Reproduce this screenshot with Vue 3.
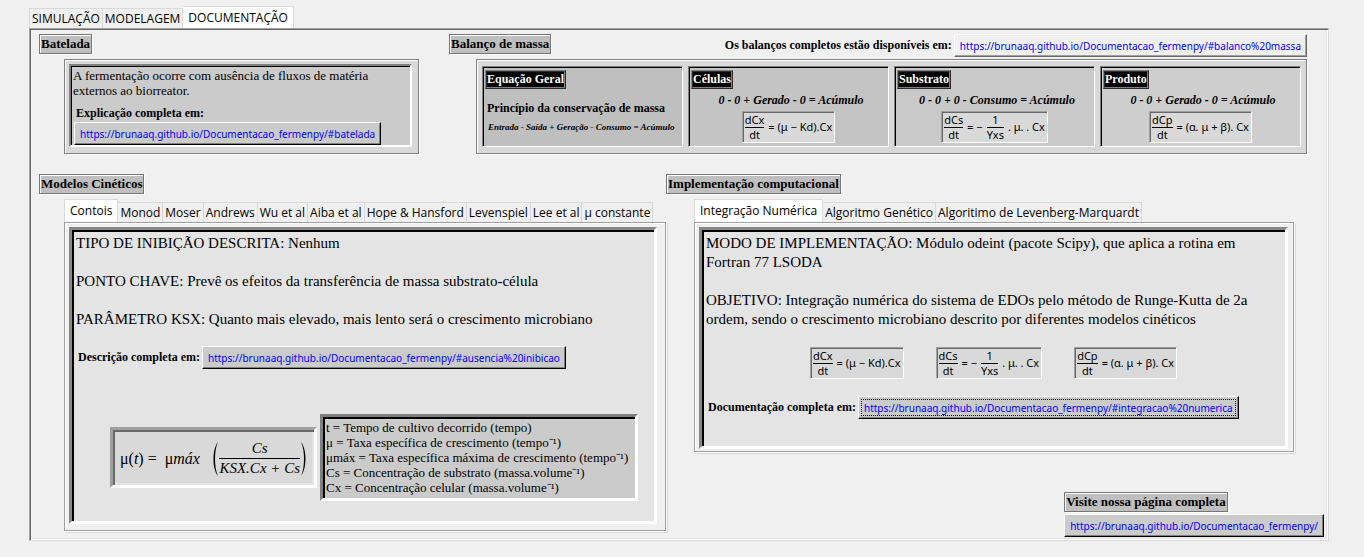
<script setup>
import { ref } from 'vue'

const base = 'https://brunaaq.github.io/Documentacao_fermenpy/'

const mainTabs = ['SIMULAÇÃO', 'MODELAGEM', 'DOCUMENTAÇÃO']
const modelTabs = ['Contois', 'Monod', 'Moser', 'Andrews', 'Wu et al', 'Aiba et al', 'Hope & Hansford', 'Levenspiel', 'Lee et al', 'μ constante']
const methodTabs = ['Integração Numérica', 'Algoritmo Genético', 'Algoritimo de Levenberg-Marquardt']

const mainTab = ref(2)
const modelTab = ref(0)
const methodTab = ref(0)

const equations = {
  cells: [{ n: 'dCx', d: 'dt' }, '= (μ − Kd).Cx'],
  substrate: [{ n: 'dCs', d: 'dt' }, '= −', { n: '1', d: 'Yxs' }, '. μ. . Cx'],
  product: [{ n: 'dCp', d: 'dt' }, '= (α. μ + β). Cx'],
}

const balances = [
  { title: 'Células', tone: 'tone-2', text: '0 - 0 + Gerado - 0 = Acúmulo', eq: equations.cells },
  { title: 'Substrato', tone: 'tone-3', text: '0 - 0 + 0 - Consumo = Acúmulo', eq: equations.substrate },
  { title: 'Produto', tone: 'tone-4', text: '0 - 0 + Gerado - 0 = Acúmulo', eq: equations.product },
]

const legend = [
  't = Tempo de cultivo decorrido (tempo)',
  'μ = Taxa específica de crescimento (tempo⁻¹)',
  'μmáx = Taxa específica máxima de crescimento (tempo⁻¹)',
  'Cs = Concentração de substrato (massa.volume⁻¹)',
  'Cx = Concentração celular (massa.volume⁻¹)',
]
</script>

<template>
  <main class="window">
    <div class="tabs main-tabs" role="tablist">
      <button v-for="(t, i) in mainTabs" :key="t" type="button" role="tab" class="tab" :class="{ active: i === mainTab }" :aria-selected="i === mainTab" @click="mainTab = i">{{ t }}</button>
    </div>

    <div class="page">
      <div class="row top-row">
        <section>
          <h2 class="title">Batelada</h2>
          <div class="frame batch">
            <div class="sunken note">
              <p>A fermentação ocorre com ausência de fluxos de matéria<br>externos ao biorreator.</p>
              <p class="caption">Explicação completa em:</p>
              <button type="button" class="link">{{ base }}#batelada</button>
            </div>
          </div>
        </section>

        <section>
          <div class="head">
            <h2 class="title">Balanço de massa</h2>
            <div class="head-link">
              <span class="caption">Os balanços completos estão disponíveis em:</span>
              <button type="button" class="link pale">{{ base }}#balanco%20massa</button>
            </div>
          </div>
          <div class="frame balance">
            <div class="cell tone-1">
              <h3 class="tag">Equação Geral</h3>
              <p class="caption principle">Princípio da conservação de massa</p>
              <p class="general">Entrada - Saída + Geração - Consumo = Acúmulo</p>
            </div>
            <div v-for="b in balances" :key="b.title" class="cell" :class="b.tone">
              <h3 class="tag">{{ b.title }}</h3>
              <p class="terms">{{ b.text }}</p>
              <div class="eq">
                <template v-for="(part, k) in b.eq" :key="k">
                  <span v-if="part.n" class="frac"><span>{{ part.n }}</span><span>{{ part.d }}</span></span>
                  <span v-else>{{ part }}</span>
                </template>
              </div>
            </div>
          </div>
        </section>
      </div>

      <div class="row bottom-row">
        <section>
          <h2 class="title">Modelos Cinéticos</h2>
          <div class="notebook">
            <div class="tabs" role="tablist">
              <button v-for="(t, i) in modelTabs" :key="t" type="button" role="tab" class="tab" :class="{ active: i === modelTab }" :aria-selected="i === modelTab" @click="modelTab = i">{{ t }}</button>
            </div>
            <div class="pane">
              <div class="deep model">
                <p class="body">TIPO DE INIBIÇÃO DESCRITA: Nenhum<br><br>PONTO CHAVE: Prevê os efeitos da transferência de massa substrato-célula<br><br>PARÂMETRO KSX: Quanto mais elevado, mais lento será o crescimento microbiano</p>
                <div class="link-row">
                  <span class="caption">Descrição completa em:</span>
                  <button type="button" class="link">{{ base }}#ausencia%20inibicao</button>
                </div>
                <div class="formula-row">
                  <div class="formula">
                    <span>μ(<i>t</i>) =&nbsp; μ<i>máx</i></span>
                    <div class="group">
                      <svg class="paren" viewBox="0 0 8 36" aria-hidden="true"><path d="M7 1C1 8 1 28 7 35C3 27 3 9 7 1Z" /></svg>
                      <span class="frac"><i>Cs</i><i>KSX.Cx + Cs</i></span>
                      <svg class="paren" viewBox="0 0 8 36" aria-hidden="true"><path d="M1 1C7 8 7 28 1 35C5 27 5 9 1 1Z" /></svg>
                    </div>
                  </div>
                  <ul class="legend">
                    <li v-for="l in legend" :key="l">{{ l }}</li>
                  </ul>
                </div>
              </div>
            </div>
          </div>
        </section>

        <section class="methods">
          <h2 class="title">Implementação computacional</h2>
          <div class="notebook">
            <div class="tabs" role="tablist">
              <button v-for="(t, i) in methodTabs" :key="t" type="button" role="tab" class="tab" :class="{ active: i === methodTab }" :aria-selected="i === methodTab" @click="methodTab = i">{{ t }}</button>
            </div>
            <div class="pane">
              <div class="deep method">
                <p class="body">MODO DE IMPLEMENTAÇÃO: Módulo odeint (pacote Scipy), que aplica a rotina em<br>Fortran 77 LSODA<br><br>OBJETIVO: Integração numérica do sistema de EDOs pelo método de Runge-Kutta de 2a<br>ordem, sendo o crescimento microbiano descrito por diferentes modelos cinéticos</p>
                <div class="eq-row">
                  <div v-for="(eq, name) in equations" :key="name" class="eq">
                    <template v-for="(part, k) in eq" :key="k">
                      <span v-if="part.n" class="frac"><span>{{ part.n }}</span><span>{{ part.d }}</span></span>
                      <span v-else>{{ part }}</span>
                    </template>
                  </div>
                </div>
                <div class="link-row">
                  <span class="caption">Documentação completa em:</span>
                  <button type="button" class="link focused">{{ base }}#integracao%20numerica</button>
                </div>
              </div>
            </div>
          </div>
          <footer class="visit">
            <h2 class="title">Visite nossa página completa</h2>
            <button type="button" class="link">{{ base }}</button>
          </footer>
        </section>
      </div>
    </div>
  </main>
</template>

<style>
body {
  background: #f0f0f0;
}
</style>

<style scoped>
.window {
  padding: 6px 35px 16px 29px;
  font-family: "Liberation Serif", "Times New Roman", serif;
  color: #000;
}

* {
  box-sizing: border-box;
}

h2,
h3,
p,
ul {
  margin: 0;
  padding: 0;
}

.tabs {
  display: flex;
  align-items: flex-end;
}

.tab {
  height: 20px;
  padding: 0 2px;
  border: 1px solid #d9d9d9;
  border-width: 1px 1px 0 0;
  background: #f0f0f0;
  color: #000;
  font: 12px/19px "Open Sans", "Noto Sans", sans-serif;
  white-space: nowrap;
}

.tab:first-child {
  border-left-width: 1px;
}

.tab.active {
  height: 23px;
  padding: 0 5px;
  background: #fff;
  line-height: 20px;
}

.main-tabs .tab {
  height: 20px;
}

.main-tabs .tab.active {
  height: 22px;
}

.page {
  padding: 5px 2px 3px 9px;
  border: 1px solid;
  border-color: #a0a0a0 #d9d9d9 #d9d9d9 #a0a0a0;
  box-shadow: inset 1px 1px #696969, inset -1px -1px #fff, inset -2px -2px #e3e3e3;
}

.row {
  display: grid;
}

.top-row {
  grid-template-columns: 380fr 858fr;
  gap: 30px;
  padding-right: 19px;
}

.bottom-row {
  grid-template-columns: 627fr 658fr;
  margin-top: 20px;
  padding-right: 2px;
}

.row section {
  min-width: 0;
}

.title {
  width: fit-content;
  padding: 0 1px;
  border: 1px solid #767676;
  box-shadow: inset 1px 1px #fff, 1px 1px #fff;
  background: #bfbfbf;
  font-size: 13px;
  line-height: 18px;
  white-space: nowrap;
}

.frame {
  margin-top: 5px;
  border: 1px solid #808080;
  box-shadow: inset 1px 1px #fff, 1px 1px #fff;
  background: #d9d9d9;
}

.batch {
  height: 95px;
  margin-left: 25px;
  padding: 4px 6px 6px 4px;
}

.sunken {
  border: 2px solid;
  border-color: #808080 #fff #fff #808080;
  box-shadow: inset 1px 1px #000;
  background: #cbcbcb;
}

.note {
  height: 83px;
  padding: 2px;
  font-size: 13px;
  line-height: 15px;
}

.note .caption {
  margin: 7px 0 0 3px;
  line-height: 17px;
}

.note .link {
  margin-left: 1px;
}

.caption {
  font-size: 12px;
  font-weight: bold;
  white-space: nowrap;
}

.link {
  display: block;
  height: 23px;
  padding: 0 5px;
  border: 1px solid;
  border-color: #fff #000 #000 #fff;
  box-shadow: inset -1px -1px #808080;
  background: #cbcbcb;
  color: #00f;
  font: 10px/20px "Noto Sans", "Open Sans", sans-serif;
  white-space: nowrap;
}

.link.pale {
  border-color: #fff #696969 #696969 #fff;
  box-shadow: inset -1px -1px #a0a0a0;
  background: #f0f0f0;
}

.link.focused {
  outline: 1px dotted #000;
  outline-offset: -4px;
}

.head {
  display: flex;
  justify-content: space-between;
  height: 20px;
}

.head-link {
  display: flex;
  align-items: center;
  gap: 2px;
  height: 23px;
}

.balance {
  display: grid;
  grid-template-columns: repeat(4, 1fr);
  gap: 5px;
  height: 95px;
  margin-left: 27px;
  padding: 6px 5px;
}

.cell {
  border: 1px solid;
  border-color: #808080 #fff #fff #808080;
  box-shadow: inset 1px 1px #000;
  padding: 3px 2px;
  white-space: nowrap;
}

.tone-1 {
  background: #bfbfbf;
}

.tone-2 {
  background: #c4c4c4;
}

.tone-3 {
  background: #c9c9c9;
}

.tone-4 {
  background: #cecece;
}

.tag {
  width: fit-content;
  border: 2px ridge #808080;
  background: #000;
  color: #fff;
  font-size: 12px;
  line-height: 15px;
}

.principle {
  margin: 11px 0 0 2px;
  line-height: 16px;
}

.general {
  margin-left: 3px;
  font-size: 9px;
  font-style: italic;
  font-weight: bold;
  line-height: 22px;
}

.terms {
  padding-left: 5px;
  font-size: 12px;
  font-style: italic;
  font-weight: bold;
  line-height: 22px;
  text-align: center;
}

.eq {
  display: flex;
  align-items: center;
  gap: 4px;
  width: fit-content;
  height: 32px;
  padding: 0 2px;
  border: 1px solid;
  border-color: #a0a0a0 #fff #fff #a0a0a0;
  box-shadow: inset 1px 1px #696969;
  background: #d9d9d9;
  font: 11px/14px "Noto Sans", sans-serif;
  white-space: nowrap;
}

.cell .eq {
  margin: 0 auto;
}

.frac {
  display: flex;
  flex-direction: column;
  text-align: center;
}

.frac > :first-child {
  border-bottom: 1px solid #000;
}

.notebook {
  margin: 5px 0 0 25px;
}

.pane {
  padding: 4px 8px 6px 4px;
  border: 1px solid #a0a0a0;
  box-shadow: inset 1px 1px #fff, 1px 1px #fff, 2px 2px #d9d9d9;
}

.methods .pane {
  padding: 4px 5px 2px 4px;
}

.deep {
  padding: 4px 3px 0 4px;
  border: 3px solid;
  border-color: #888 #fff #fff #888;
  box-shadow: inset 2px 2px #000;
  background: #e4e4e4;
}

.model {
  height: 297px;
}

.method {
  height: 222px;
}

.body {
  font-size: 15px;
  line-height: 19px;
  white-space: nowrap;
}

.link-row {
  display: flex;
  align-items: center;
  gap: 2px;
  margin: 17px 0 0 2px;
}

.formula-row {
  display: flex;
  align-items: flex-start;
  gap: 3px;
  margin: 45px 0 0 34px;
}

.formula {
  display: flex;
  align-items: center;
  justify-content: space-between;
  width: 207px;
  height: 61px;
  margin-top: 13px;
  padding: 2px 6px 0 7px;
  border: 3px solid;
  border-color: #a0a0a0 #fff #fff #a0a0a0;
  box-shadow: inset 2px 2px #696969, inset -2px -2px #e3e3e3;
  background: #d9d9d9;
  font-size: 16px;
  line-height: 19px;
  white-space: nowrap;
}

.group {
  display: flex;
  align-items: center;
  font-size: 15px;
}

.paren {
  width: 8px;
  height: 36px;
}

.legend {
  width: 318px;
  padding: 3px;
  border: 3px solid;
  border-color: #808080 #fff #fff #808080;
  box-shadow: inset 2px 2px #000;
  background: #cbcbcb;
  font-size: 13px;
  line-height: 15px;
  list-style: none;
  white-space: nowrap;
}

.methods {
  display: flex;
  flex-direction: column;
}

.methods .notebook {
  margin: 5px 30px 0 28px;
}

.eq-row {
  display: flex;
  gap: 32px;
  margin: 18px 0 0 104px;
}

.visit {
  align-self: flex-end;
  margin-top: 40px;
}

.visit .link {
  margin-top: 2px;
}
</style>
